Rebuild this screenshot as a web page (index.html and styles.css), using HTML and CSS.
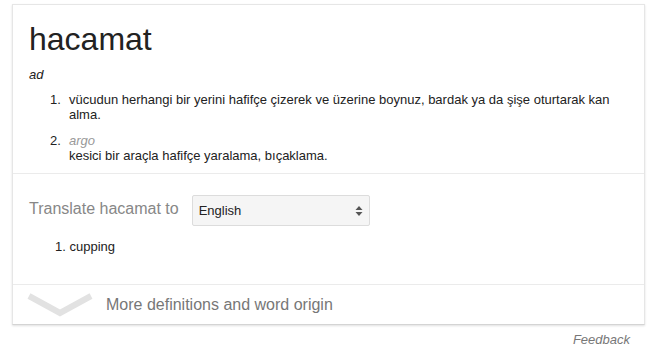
FILE: index.html
```html
<!DOCTYPE html>
<html lang="tr">
<head>
    <meta charset="UTF-8">
    <meta name="viewport" content="width=device-width, initial-scale=1.0">
    <title>hacamat</title>
    <link rel="stylesheet" href="styles.css">
</head>
<body>
    <div class="card">
        <div class="entry">
            <h1 class="word">hacamat</h1>
            <div class="pos">ad</div>
            <ol class="senses">
                <li class="sense">
                    <span class="num">1.</span>
                    <div class="def">vücudun herhangi bir yerini hafifçe çizerek ve üzerine boynuz, bardak ya da şişe oturtarak kan alma.</div>
                </li>
                <li class="sense">
                    <span class="num">2.</span>
                    <div class="def">
                        <div class="label">argo</div>
                        kesici bir araçla hafifçe yaralama, bıçaklama.
                    </div>
                </li>
            </ol>
        </div>

        <div class="translate">
            <div class="translate-row">
                <span class="translate-label">Translate hacamat to</span>
                <div class="select">
                    <span>English</span>
                    <svg width="8" height="12" viewBox="0 0 8 12">
                        <path d="M4 1 L7.5 5 L0.5 5 Z" fill="#555"/>
                        <path d="M4 11 L7.5 7 L0.5 7 Z" fill="#555"/>
                    </svg>
                </div>
            </div>
            <div class="result">1. cupping</div>
        </div>

        <div class="more">
            <svg class="chevron" width="66" height="24" viewBox="0 0 66 24">
                <path d="M2 3 L33 20 L64 3" fill="none" stroke="#e2e2e2" stroke-width="6"/>
            </svg>
            <span>More definitions and word origin</span>
        </div>
    </div>
    <div class="feedback">Feedback</div>
</body>
</html>
```

FILE: styles.css
```css
body {
    margin: 0;
    padding: 4px 9px 0 12px;
    font-family: "Liberation Sans", Arial, sans-serif;
    color: #222;
    background: #fff;
}
.card {
    border: 1px solid #e6e6e6;
    border-bottom-color: #d4d4d4;
    box-shadow: 0 1px 2px rgba(0, 0, 0, 0.12);
}
.entry {
    padding: 16px 16px 10px 16px;
    border-bottom: 1px solid #ebebeb;
}
.word {
    margin: 0;
    font-size: 32px;
    line-height: 36px;
    font-weight: normal;
    color: #222;
}
.pos {
    margin-top: 10px;
    font-size: 13px;
    line-height: 16px;
    font-style: italic;
}
.senses {
    list-style: none;
    margin: 9px 0 0 0;
    padding: 0;
}
.sense {
    display: flex;
    font-size: 13px;
    line-height: 15px;
    margin-bottom: 11px;
}
.sense:last-child {
    margin-bottom: 0;
}
.num {
    flex: none;
    width: 19px;
    padding-left: 21px;
}
.def {
    padding-right: 12px;
}
.label {
    font-style: italic;
    color: #999;
}
.translate {
    padding: 21px 16px 0 16px;
    height: 111px;
    box-sizing: border-box;
    border-bottom: 1px solid #ebebeb;
}
.translate-row {
    display: flex;
    align-items: center;
    gap: 13px;
}
.translate-label {
    font-size: 16px;
    color: #878787;
    margin-top: -4px;
}
.select {
    width: 178px;
    height: 31px;
    display: flex;
    align-items: center;
    justify-content: space-between;
    padding: 0 6px;
    box-sizing: border-box;
    background: #f5f5f5;
    border: 1px solid #dcdcdc;
    border-radius: 2px;
    font-size: 13px;
    color: #222;
}
.result {
    margin-top: 13px;
    padding-left: 26px;
    font-size: 13px;
    line-height: 16px;
}
.more {
    height: 39px;
    display: flex;
    align-items: center;
    gap: 13px;
    padding-left: 14px;
    font-size: 16px;
    color: #777;
}
.chevron {
    flex: none;
}
.feedback {
    text-align: right;
    padding: 7px 15px 0 0;
    font-size: 13px;
    font-style: italic;
    color: #777;
}
```
